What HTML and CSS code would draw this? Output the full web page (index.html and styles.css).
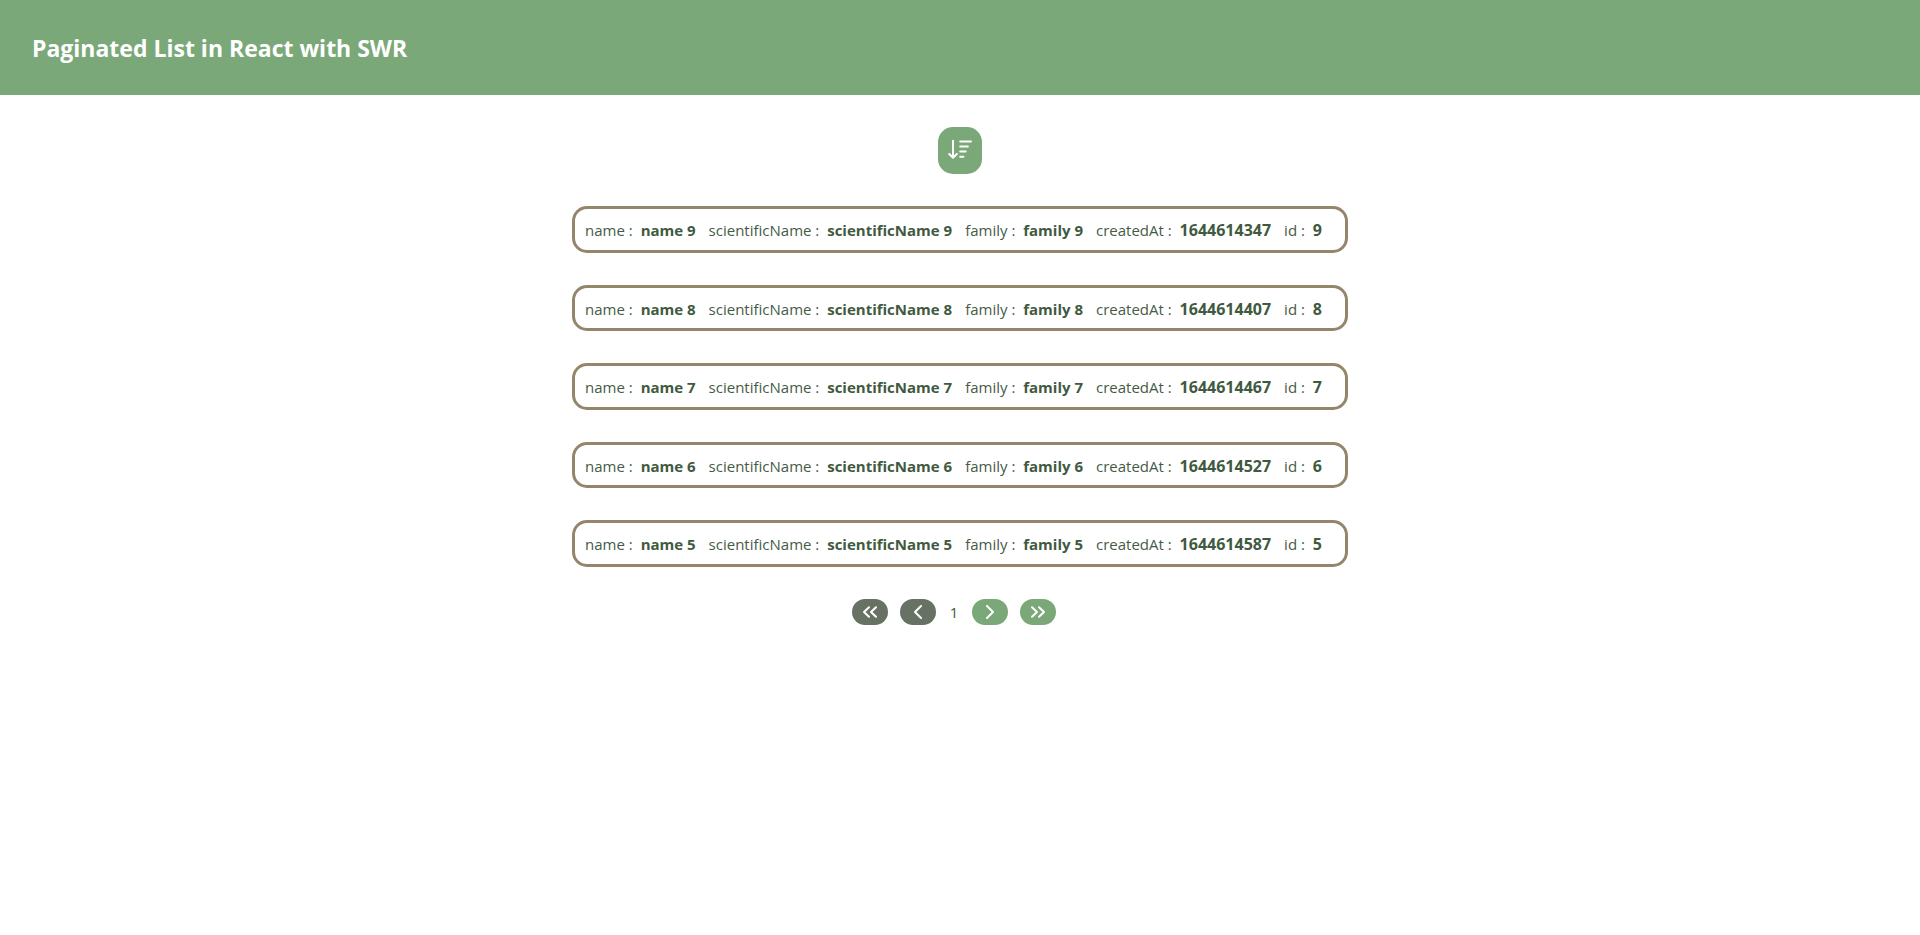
FILE: index.html
```html
<!DOCTYPE html>
<html lang="en">
<head>
<meta charset="utf-8">
<title>Paginated List in React with SWR</title>
<link rel="stylesheet" href="styles.css">
</head>
<body>
<header class="header"><h1 class="title">Paginated List in React with SWR</h1></header>
<main class="main">
  <button class="sort" type="button" aria-label="Sort descending">
    <svg class="sort-icon" viewBox="0 0 24 27"><path d="M5 3.700v17M1.200 17l3.800 3.800L8.800 17M12.200 4.400h10.800M12.200 9.500h7.700M12.200 14.600h5.500M12.200 19.700h3.300"/></svg>
  </button>
  <ul class="list">
    <li class="card"><span class="field">name : <b class="value">name 9</b></span><span class="field">scientificName : <b class="value">scientificName 9</b></span><span class="field">family : <b class="value">family 9</b></span><span class="field">createdAt : <b class="value number">1644614347</b></span><span class="field">id : <b class="value number">9</b></span></li>
    <li class="card"><span class="field">name : <b class="value">name 8</b></span><span class="field">scientificName : <b class="value">scientificName 8</b></span><span class="field">family : <b class="value">family 8</b></span><span class="field">createdAt : <b class="value number">1644614407</b></span><span class="field">id : <b class="value number">8</b></span></li>
    <li class="card"><span class="field">name : <b class="value">name 7</b></span><span class="field">scientificName : <b class="value">scientificName 7</b></span><span class="field">family : <b class="value">family 7</b></span><span class="field">createdAt : <b class="value number">1644614467</b></span><span class="field">id : <b class="value number">7</b></span></li>
    <li class="card"><span class="field">name : <b class="value">name 6</b></span><span class="field">scientificName : <b class="value">scientificName 6</b></span><span class="field">family : <b class="value">family 6</b></span><span class="field">createdAt : <b class="value number">1644614527</b></span><span class="field">id : <b class="value number">6</b></span></li>
    <li class="card"><span class="field">name : <b class="value">name 5</b></span><span class="field">scientificName : <b class="value">scientificName 5</b></span><span class="field">family : <b class="value">family 5</b></span><span class="field">createdAt : <b class="value number">1644614587</b></span><span class="field">id : <b class="value number">5</b></span></li>
  </ul>
  <nav class="pager" aria-label="Pagination">
    <button class="page-button" type="button" disabled aria-label="First page"><svg class="page-icon" viewBox="0 0 16 14"><path d="M7 2.200L2 7l5 4.800M14 2.200L9 7l5 4.800"/></svg></button>
    <button class="page-button" type="button" disabled aria-label="Previous page"><svg class="page-icon" viewBox="0 0 16 14"><path d="M11 1L5 7l6 6"/></svg></button>
    <span class="page-number">1</span>
    <button class="page-button" type="button" aria-label="Next page"><svg class="page-icon" viewBox="0 0 16 14"><path d="M5 1l6 6-6 6"/></svg></button>
    <button class="page-button" type="button" aria-label="Last page"><svg class="page-icon" viewBox="0 0 16 14"><path d="M2 2.200L7 7l-5 4.800M9 2.200L14 7l-5 4.800"/></svg></button>
  </nav>
</main>
</body>
</html>
```
FILE: styles.css
```css
* { box-sizing: border-box; }
body {
  margin: 0;
  background: #fff;
  color: #465b46;
  font-family: "Segoe UI", "Open Sans", "Noto Sans", sans-serif;
  font-size: 15px;
  line-height: 1.5;
}
.header { padding: 33px 32px 31px; background: #7ba879; color: #fff; }
.title { margin: 0; font-size: 23px; line-height: 31px; font-weight: 700; }
.main {
  display: flex;
  flex-direction: column;
  align-items: center;
  gap: 32px;
  padding: 32px;
}
.sort {
  display: flex;
  padding: 10px;
  border: 0;
  border-radius: 15px;
  background: #7ba879;
}
.sort-icon { width: 24px; height: 27px; }
.sort-icon, .page-icon {
  fill: none;
  stroke: #fff;
  stroke-width: 2;
  stroke-linecap: round;
  stroke-linejoin: round;
}
.list {
  display: flex;
  flex-direction: column;
  gap: 32px;
  margin: 0;
  padding: 0;
  list-style: none;
}
.card {
  display: flex;
  gap: 13px;
  padding: 10px 23px 8px 10px;
  border: 3px solid #94866a;
  border-radius: 15px;
}
.value { margin-left: 4px; color: #3f5a40; }
.number { font-size: 16px; line-height: 1; }
.pager { display: flex; align-items: center; gap: 12px; padding-right: 12px; }
.page-button {
  display: flex;
  padding: 6px 10px;
  border: 0;
  border-radius: 13px;
  background: #7ba879;
}
.page-button:disabled { background: #687264; }
.page-icon { width: 16px; height: 14px; }
.page-number { min-width: 12px; padding-top: 2px; text-align: center; }
```
